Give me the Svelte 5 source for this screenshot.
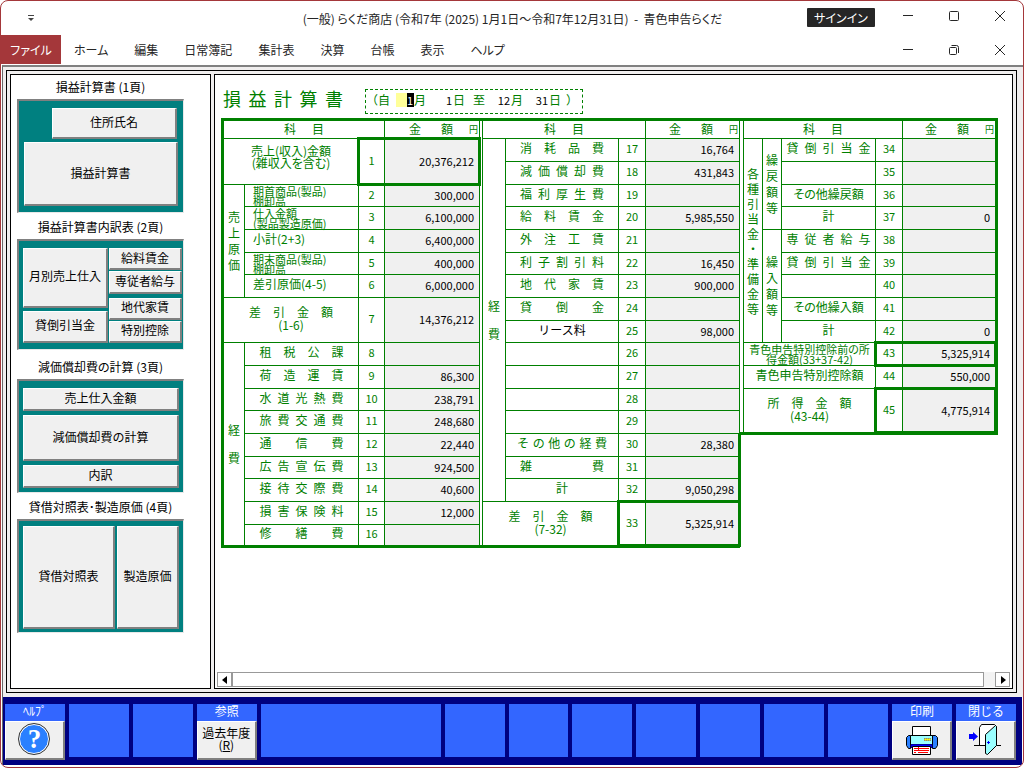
<script lang="ts">
  type Group = { text: string; rows: number; pitch: number };
  type Row = {
    groups?: Group[];
    name: string;
    kind?: 'spread' | 'wide' | 'small' | 'top' | 'input';
    sub?: string;
    colspan?: number;
    rows?: number;
    no: number;
    amount?: string;
    strong?: boolean;
    edge?: boolean;
  };
  type Block = { cols: number[]; rows: Row[] };

  const menus = ['ホーム', '編集', '日常簿記', '集計表', '決算', '台帳', '表示', 'ヘルプ'];

  const blocks: Block[] = [
    {
      cols: [21, 114, 26, 95],
      rows: [
        { name: '売上(収入)金額', sub: '(雑収入を含む)', kind: 'top', colspan: 2, rows: 2, no: 1, amount: '20,376,212', strong: true },
        { groups: [{ text: '売上原価', rows: 5, pitch: 16 }], name: '期首商品(製品)', sub: '棚卸高', kind: 'small', no: 2, amount: '300,000' },
        { name: '仕入金額', sub: '(製品製造原価)', kind: 'small', no: 3, amount: '6,100,000' },
        { name: '小計(2+3)', kind: 'small', no: 4, amount: '6,400,000' },
        { name: '期末商品(製品)', sub: '棚卸高', kind: 'small', no: 5, amount: '400,000' },
        { name: '差引原価(4-5)', kind: 'small', no: 6, amount: '6,000,000' },
        { name: '差引金額', sub: '(1-6)', kind: 'spread', colspan: 2, rows: 2, no: 7, amount: '14,376,212' },
        { groups: [{ text: '経費', rows: 9, pitch: 28 }], name: '租税公課', kind: 'spread', no: 8 },
        { name: '荷造運賃', kind: 'spread', no: 9, amount: '86,300' },
        { name: '水道光熱費', kind: 'spread', no: 10, amount: '238,791' },
        { name: '旅費交通費', kind: 'spread', no: 11, amount: '248,680' },
        { name: '通信費', kind: 'spread', no: 12, amount: '22,440' },
        { name: '広告宣伝費', kind: 'spread', no: 13, amount: '924,500' },
        { name: '接待交際費', kind: 'spread', no: 14, amount: '40,600' },
        { name: '損害保険料', kind: 'spread', no: 15, amount: '12,000' },
        { name: '修繕費', kind: 'spread', no: 16 }
      ]
    },
    {
      cols: [23, 113, 27, 94],
      rows: [
        { groups: [{ text: '経費', rows: 16, pitch: 28 }], name: '消耗品費', kind: 'spread', no: 17, amount: '16,764' },
        { name: '減価償却費', kind: 'spread', no: 18, amount: '431,843' },
        { name: '福利厚生費', kind: 'spread', no: 19 },
        { name: '給料賃金', kind: 'spread', no: 20, amount: '5,985,550' },
        { name: '外注工賃', kind: 'spread', no: 21 },
        { name: '利子割引料', kind: 'spread', no: 22, amount: '16,450' },
        { name: '地代家賃', kind: 'spread', no: 23, amount: '900,000' },
        { name: '貸倒金', kind: 'spread', no: 24 },
        { name: 'リース料', kind: 'input', no: 25, amount: '98,000' },
        { name: '', kind: 'input', no: 26 },
        { name: '', kind: 'input', no: 27 },
        { name: '', kind: 'input', no: 28 },
        { name: '', kind: 'input', no: 29 },
        { name: 'その他の経費', kind: 'wide', no: 30, amount: '28,380', edge: true },
        { name: '雑費', kind: 'spread', no: 31, edge: true },
        { name: '計', no: 32, amount: '9,050,298', edge: true },
        { name: '差引金額', sub: '(7-32)', kind: 'spread', colspan: 2, rows: 2, no: 33, amount: '5,325,914', strong: true }
      ]
    },
    {
      cols: [19, 19, 94, 27, 93],
      rows: [
        { groups: [{ text: '各種引当金・準備金等', rows: 9, pitch: 15 }, { text: '繰戻額等', rows: 4, pitch: 16 }], name: '貸倒引当金', kind: 'spread', no: 34 },
        { name: '', kind: 'input', no: 35 },
        { name: 'その他繰戻額', no: 36 },
        { name: '計', no: 37, amount: '0' },
        { groups: [{ text: '繰入額等', rows: 5, pitch: 16 }], name: '専従者給与', kind: 'spread', no: 38 },
        { name: '貸倒引当金', kind: 'spread', no: 39 },
        { name: '', kind: 'input', no: 40 },
        { name: 'その他繰入額', no: 41 },
        { name: '計', no: 42, amount: '0' },
        { name: '青色申告特別控除前の所', sub: '得金額(33+37-42)', kind: 'small', colspan: 3, no: 43, amount: '5,325,914', strong: true },
        { name: '青色申告特別控除額', colspan: 3, no: 44, amount: '550,000' },
        { name: '所得金額', sub: '(43-44)', kind: 'spread', colspan: 3, rows: 2, no: 45, amount: '4,775,914', strong: true }
      ]
    }
  ];

  const sum = (list: number[]) => list.reduce((a, b) => a + b, 0);
</script>

{#snippet spread(text: string)}
  {#each [...text] as ch}<span>{ch}</span>{/each}
{/snippet}

{#snippet winButtons(restore: boolean)}
  <div class="win-buttons">
    <button aria-label="最小化"><svg width="12" height="12"><path d="M1 5.5h10" /></svg></button>
    <button aria-label={restore ? '元に戻す' : '最大化'}>
      {#if restore}
        <svg width="12" height="12"><rect x="1.5" y="3.5" width="7" height="7" rx="1" /><path d="M3.5 1.5h5a2 2 0 0 1 2 2v5.5" /></svg>
      {:else}
        <svg width="12" height="12"><rect x="1.5" y="1.5" width="9" height="9" rx="1" /></svg>
      {/if}
    </button>
    <button aria-label="閉じる"><svg width="12" height="12"><path d="M1 1l10 10M11 1L1 11" /></svg></button>
  </div>
{/snippet}

<div class="window">
  <header class="titlebar">
    <button class="quick" aria-label="クイックアクセス">
      <svg width="8" height="8"><path d="M1 1.5h6" /><path d="M1 4h6l-3 3z" class="solid" /></svg>
    </button>
    <div class="caption">(一般) らくだ商店 (令和7年 (2025) 1月1日～令和7年12月31日)&nbsp; -&nbsp; 青色申告らくだ</div>
    <div class="right">
      <button class="signin">サインイン</button>
      {@render winButtons(false)}
    </div>
  </header>

  <nav class="menubar">
    <button class="file">ファイル</button>
    {#each menus as menu}
      <button class="menu">{menu}</button>
    {/each}
    {@render winButtons(true)}
  </nav>

  <div class="workspace">
    <div class="frame">
      <aside class="sidebar">
        <h2>損益計算書 (1頁)</h2>
        <div class="page page1">
          <button class="short">住所氏名</button>
          <button class="tall">損益計算書</button>
        </div>
        <h2>損益計算書内訳表 (2頁)</h2>
        <div class="page page2">
          <div class="stack main">
            <button>月別売上仕入</button>
            <button>貸倒引当金</button>
          </div>
          <div class="stack side">
            <div class="pair"><button>給料賃金</button><button>専従者給与</button></div>
            <div class="pair"><button>地代家賃</button><button>特別控除</button></div>
          </div>
        </div>
        <h2>減価償却費の計算 (3頁)</h2>
        <div class="page page3">
          <button>売上仕入金額</button>
          <button class="tall">減価償却費の計算</button>
          <button>内訳</button>
        </div>
        <h2>貸借対照表･製造原価 (4頁)</h2>
        <div class="page page4">
          <button class="sheet4">貸借対照表</button>
          <button class="cost4">製造原価</button>
        </div>
      </aside>

      <main class="content">
        <div class="form">
          <div class="heading">
            <h1>{@render spread('損益計算書')}</h1>
            <div class="period">
              <span>（自</span>
              <label><input class="current" value="1" aria-label="自 月" />月</label>
              <label><input class="from-day" value="1" aria-label="自 日" />日</label>
              <span class="to">至</span>
              <label><input value="12" aria-label="至 月" />月</label>
              <label><input value="31" aria-label="至 日" />日</label>
              <span class="close">）</span>
            </div>
          </div>

          <div class="sheet">
            {#each blocks as block}
              <div class="block">
                <table style="width: {sum(block.cols)}px">
                  <colgroup>
                    {#each block.cols as width}<col style="width: {width}px" />{/each}
                  </colgroup>
                  <thead>
                    <tr>
                      <th colspan={block.cols.length - 1}><div class="subject">{@render spread('科目')}</div></th>
                      <th>
                        <div class="money">
                          <div class="money-name">{@render spread('金額')}</div>
                          <small>円</small>
                        </div>
                      </th>
                    </tr>
                  </thead>
                  <tbody>
                    {#each block.rows as row}
                      <tr>
                        {#each row.groups ?? [] as group}
                          <th rowspan={group.rows}><div class="group" style="line-height: {group.pitch}px">{group.text}</div></th>
                        {/each}
                        <th class="name {row.kind ?? ''}" colspan={row.colspan ?? 1} rowspan={row.rows ?? 1}>
                          {#if row.kind === 'input'}
                            <input value={row.name} aria-label="科目 {row.no}" />
                          {:else if row.kind === 'spread' || row.kind === 'wide'}
                            <div class="letters">{@render spread(row.name)}</div>
                            {#if row.sub}<div class="sub">{row.sub}</div>{/if}
                          {:else}
                            <div class="lines" class:single={!row.sub} class:centered={row.colspan === 3}>
                              {row.name}{#if row.sub}<br />{row.sub}{/if}
                            </div>
                          {/if}
                        </th>
                        <td class="no" class:strong={row.strong} rowspan={row.rows ?? 1}>{row.no}</td>
                        <td class="amount" class:strong={row.strong} class:edge={row.edge} rowspan={row.rows ?? 1}>{row.amount ?? ''}</td>
                      </tr>
                      {#if row.rows === 2}<tr></tr>{/if}
                    {/each}
                  </tbody>
                </table>
              </div>
            {/each}
          </div>
        </div>

        <div class="scrollbar">
          <button aria-label="左へ"><svg width="14" height="14"><path d="M9 3v8L4 7z" /></svg></button>
          <div class="thumb"></div>
          <button aria-label="右へ"><svg width="14" height="14"><path d="M5 3v8l5-4z" /></svg></button>
        </div>
      </main>
    </div>
  </div>

  <footer class="functions">
    <div class="key">
      <span>ﾍﾙﾌﾟ</span>
      <button aria-label="ヘルプ"><span class="help">?</span></button>
    </div>
    <div class="key"></div>
    <div class="key"></div>
    <div class="key">
      <span>参照</span>
      <button>過去年度<br />(<u>R</u>)</button>
    </div>
    <div class="key long"></div>
    {#each Array(7) as _}<div class="key"></div>{/each}
    <div class="key">
      <span>印刷</span>
      <button aria-label="印刷">
        <svg width="32" height="31" viewBox="0 0 32 31">
          <path d="M6.5 2.5h18v10h-18z" fill="#fff" stroke="#000" />
          <path d="M4.5 11.5h23v9h-23z" fill="#99ffff" stroke="#000" />
          <path d="M2.5 11.5h2v13h-2l-2-3v-8z" fill="#2a80ff" stroke="#000" />
          <path d="M29.5 11.5h-3v13h3l2-3v-8z" fill="#2a80ff" stroke="#000" />
          <path d="M5 20.5h21v3H5z" fill="#0000ff" stroke="#0000a0" />
          <path d="M18 14h7v3h-7z" fill="#888" />
          <path d="M19 15h1v1h-1zM21 15h1v1h-1zM23 15h1v1h-1z" fill="#ff0" stroke="#ff0" />
          <path d="M6.5 22.5h18v8h-18z" fill="#fff" stroke="#000" />
          <path d="M8 24.5h15M8 26.5h15M8 28.5h2M12 28.5h10M12.5 23v4" stroke="#f00" />
        </svg>
      </button>
    </div>
    <div class="key">
      <span>閉じる</span>
      <button aria-label="閉じる">
        <svg width="34" height="32" viewBox="0 0 34 32">
          <path d="M0 11h4V9l5 4.5L4 18v-2H0z" fill="#0000ff" />
          <path d="M10.5 22.5v-18l2-3h13l2 2v19" fill="#fff" stroke="#000" />
          <path d="M5 22.5h12M27 22.5h5" stroke="#000" />
          <path d="M16.5 11.5l10-9 1 1v19l-9 9-2-1z" fill="#99ffff" stroke="#000" />
          <path d="M18 19.5h3M19.5 18v3" stroke="#0000ff" />
        </svg>
      </button>
    </div>
  </footer>
</div>

<style>
  :global(body) {
    margin: 0;
    background: #fff;
  }

  .window {
    --green: #008000;
    --face: #f0f0f0;
    box-sizing: border-box;
    min-height: 100vh;
    display: flex;
    flex-direction: column;
    border: 1px solid #a4373a;
    border-radius: 8px;
    padding: 0 0 2px 1px;
    overflow: hidden;
    background: #fff;
    color: #000;
    font: 12px/14px 'Noto Sans CJK JP', sans-serif;
  }

  button,
  input {
    box-sizing: border-box;
    margin: 0;
    padding: 0;
    border: 0;
    background: none;
    color: inherit;
    font: inherit;
  }

  h1,
  h2 {
    margin: 0;
    font-weight: 400;
  }

  /* title and menu */
  .titlebar {
    display: grid;
    grid-template-columns: 1fr auto 1fr;
    height: 34px;
    color: #262626;
    font-feature-settings: 'palt';
  }

  .quick {
    width: 24px;
    height: 32px;
    margin-left: 17px;
  }

  .quick svg {
    fill: none;
    stroke: #444;
  }

  .quick .solid {
    fill: #444;
    stroke: none;
  }

  .caption {
    padding-top: 11px;
    white-space: nowrap;
  }

  .right {
    display: flex;
    justify-content: flex-end;
  }

  .signin {
    width: 68px;
    height: 19px;
    margin: 7px 10px 0 0;
    border-radius: 1px;
    background: #262626;
    color: #fff;
  }

  .win-buttons {
    display: flex;
    height: 30px;
    margin-left: auto;
  }

  .right .win-buttons {
    margin-left: 0;
  }

  .win-buttons button {
    width: 46px;
    display: flex;
    align-items: center;
    justify-content: center;
  }

  .win-buttons svg {
    fill: none;
    stroke: #262626;
  }

  .menubar {
    display: flex;
    height: 30px;
    color: #262626;
    font-feature-settings: 'palt';
  }

  .file {
    width: 60px;
    height: 29px;
    margin: 0 13px 0 -1px;
    background: #a4373a;
    color: #fff;
  }

  .menu {
    margin-right: 26px;
  }

  /* work area */
  .workspace {
    flex: 1;
    display: flex;
    padding: 3px 6px 4px 3px;
    border: solid #696969;
    border-width: 2px 0 0 1px;
    border-top-color: #808080;
    background: #f0eeee;
  }

  .frame {
    flex: 1;
    min-width: 0;
    display: flex;
    gap: 3px;
    padding: 3px;
    border: 1px solid #000;
  }

  .sidebar {
    box-sizing: border-box;
    flex: 0 0 201px;
    padding: 0 26px 0 6px;
    border: 1px solid #000;
    background: #fff;
  }

  .sidebar h2 {
    height: 24px;
    font-size: 12px;
    line-height: 24px;
    text-align: center;
    white-space: nowrap;
    font-feature-settings: 'palt';
  }

  .page {
    box-sizing: border-box;
    display: flex;
    height: 114px;
    margin-bottom: 2px;
    border: solid;
    border-width: 2px 1px 1px 2px;
    border-color: #808080 #e8e8e8 #e8e8e8 #808080;
    background: #008080;
  }

  .page button,
  .key button {
    padding-bottom: 2px;
    background: var(--face);
    border: solid;
    border-width: 1px 2px 2px 1px;
    border-color: #fff #808080 #808080 #fff;
  }

  .page1 {
    flex-direction: column;
    gap: 3px;
    padding: 7px 5px 6px;
  }

  .page1 .short {
    height: 31px;
    margin: 0 1px 0 28px;
  }

  .page .tall {
    flex: 1;
  }

  .page2 {
    gap: 1px;
    height: 111px;
    margin-bottom: 5px;
    padding: 7px 1px 6px 4px;
  }

  .stack,
  .pair {
    display: flex;
    flex-direction: column;
  }

  .main {
    flex: 85;
    gap: 3px;
  }

  .main button:first-child {
    flex: 2;
  }

  .main button {
    flex: 1;
  }

  .side {
    flex: 73;
    gap: 4px;
  }

  .pair {
    flex: 1;
    gap: 1px;
  }

  .pair button {
    flex: 1;
  }

  .page3 {
    flex-direction: column;
    gap: 4px;
    padding: 7px 4px 4px;
  }

  .page3 button {
    min-height: 23px;
  }

  .page4 {
    gap: 2px;
    padding: 5px 4px 3px;
  }

  .sheet4 {
    flex: 93;
  }

  .cost4 {
    flex: 62;
  }

  /* statement form */
  .content {
    flex: 1;
    min-width: 0;
    display: flex;
    flex-direction: column;
    border: 1px solid #000;
    background: #fff;
  }

  .form {
    flex: 1;
    padding: 14px 6px 0;
    overflow: hidden;
    color: var(--green);
  }

  .heading {
    display: flex;
    height: 29px;
  }

  h1 {
    display: flex;
    justify-content: space-between;
    width: 120px;
    margin: 0 22px 0 2px;
    font-size: 18px;
    line-height: 18px;
  }

  .period {
    box-sizing: border-box;
    display: flex;
    width: 218px;
    height: 25px;
    padding: 3px 0 0;
    border: 1px dashed var(--green);
    white-space: nowrap;
  }

  .period input {
    width: 26px;
    height: 14px;
    padding-right: 1px;
    color: #000;
    font-size: 11px;
    text-align: right;
  }

  .period .current {
    width: 18px;
    margin-left: 6px;
    background: linear-gradient(to right, #ffff99 11px, #000 11px);
    color: #fff;
  }

  .period .from-day {
    width: 27px;
  }

  .period .to {
    margin-left: 8px;
  }

  .period .close {
    margin-left: 5px;
  }

  .sheet {
    display: flex;
    align-items: flex-start;
    width: max-content;
    border-top: 3px solid var(--green);
  }

  .block {
    border-bottom: 3px solid var(--green);
  }

  .block:first-child {
    padding-right: 2px;
    border-left: 3px solid var(--green);
  }

  .block:last-child {
    padding-left: 3px;
    border-right: 3px solid var(--green);
  }

  .block + .block table {
    box-sizing: content-box;
    border-left: 1px solid var(--green);
  }

  table {
    table-layout: fixed;
    margin-bottom: -1px;
    border-collapse: separate;
    border-spacing: 0;
  }

  .block:last-child table {
    margin-right: -1px;
  }

  thead tr {
    height: 18px;
  }

  tbody tr {
    height: 23px;
  }

  tbody tr:nth-child(3n) {
    height: 22px;
  }

  tbody tr:last-child {
    height: 21px;
  }

  .block:last-child tbody tr:last-child {
    height: 22px;
  }

  th,
  td {
    padding: 0;
    border: solid var(--green);
    border-width: 0 1px 1px 0;
    font-weight: 400;
    text-align: center;
    vertical-align: middle;
  }

  thead th {
    padding-bottom: 2px;
  }

  .subject,
  .money-name,
  .letters {
    display: flex;
    justify-content: space-between;
  }

  .subject {
    width: 40px;
    margin: 0 auto;
  }

  .money {
    display: flex;
    justify-content: flex-end;
    align-items: flex-end;
    gap: 16px;
    padding-right: 1px;
  }

  .money-name {
    width: 44px;
  }

  .money small {
    font-size: 9px;
    line-height: 12px;
  }

  .group {
    width: 12px;
    margin: 0 auto;
    word-break: break-all;
    line-break: anywhere;
  }

  .name {
    padding-bottom: 4px;
    white-space: nowrap;
  }

  .letters {
    width: 84px;
    margin: 0 auto;
  }

  .wide .letters {
    width: 90px;
  }

  .sub {
    line-height: 12px;
  }

  .lines {
    line-height: 12px;
    font-feature-settings: 'palt';
  }

  .name.top {
    padding-bottom: 10px;
  }

  .name.small {
    padding: 0;
  }

  .small .lines {
    height: 20px;
    padding-left: 8px;
    font-size: 11px;
    line-height: 10px;
    text-align: left;
  }

  .small .single {
    font-size: 12px;
    line-height: 16px;
  }

  .small .centered {
    padding-left: 0;
    text-align: center;
  }

  .name input {
    width: 100%;
    height: 16px;
    color: #000;
    text-align: center;
  }

  .no,
  .amount {
    position: relative;
    padding-bottom: 4px;
  }

  .no {
    font-size: 11px;
  }

  .amount {
    padding-right: 5px;
    padding-bottom: 2px;
    background: var(--face);
    color: #000;
    font-size: 11px;
    text-align: right;
  }

  /* heavy boxes lie over the thin cell rules */
  .strong::before {
    content: '';
    position: absolute;
    z-index: 1;
    inset: -2px -1px -2px -2px;
    border: 3px solid var(--green);
    border-right: 0;
  }

  .amount.strong::before {
    inset: -2px -2px -2px 0;
    border: 3px solid var(--green);
    border-left: 0;
  }

  .edge::after {
    content: '';
    position: absolute;
    inset: -1px -2px -1px auto;
    width: 3px;
    background: var(--green);
  }

  .scrollbar {
    display: flex;
    margin: 0 2px 1px;
    background: #f3f3f3;
  }

  .scrollbar button {
    width: 15px;
    height: 15px;
    border: 1px solid #999;
    background: #fff;
  }

  .scrollbar svg {
    display: block;
    fill: #000;
  }

  .thumb {
    flex: 1;
    margin-right: 11px;
    border: 1px solid #999;
    background: #fff;
  }

  /* function keys */
  .functions {
    display: flex;
    gap: 4px;
    margin-right: 1px;
    padding: 7px 6px 5px 2px;
    border-left: 1px solid #696969;
    background: #000080;
  }

  .key {
    flex: 60 0 0;
    display: flex;
    flex-direction: column;
    height: 56px;
    color: #fff;
    text-align: center;
    background: linear-gradient(#3366ff 53px, transparent 53px);
  }

  .long {
    flex-grow: 180;
  }

  .key > span {
    height: 17px;
    line-height: 14px;
  }

  .key button {
    flex: 1;
    display: block;
    color: #000;
    line-height: 12px;
  }

  .key svg {
    display: block;
    margin: 0 auto;
    fill: none;
  }

  .help {
    display: block;
    width: 28px;
    height: 28px;
    margin: 0 auto;
    border: 1px solid #fff;
    border-radius: 50%;
    outline: 1px solid #333;
    background: #2a80ff;
    color: #fff;
    font: bold 27px/28px 'Liberation Serif', serif;
  }
</style>
